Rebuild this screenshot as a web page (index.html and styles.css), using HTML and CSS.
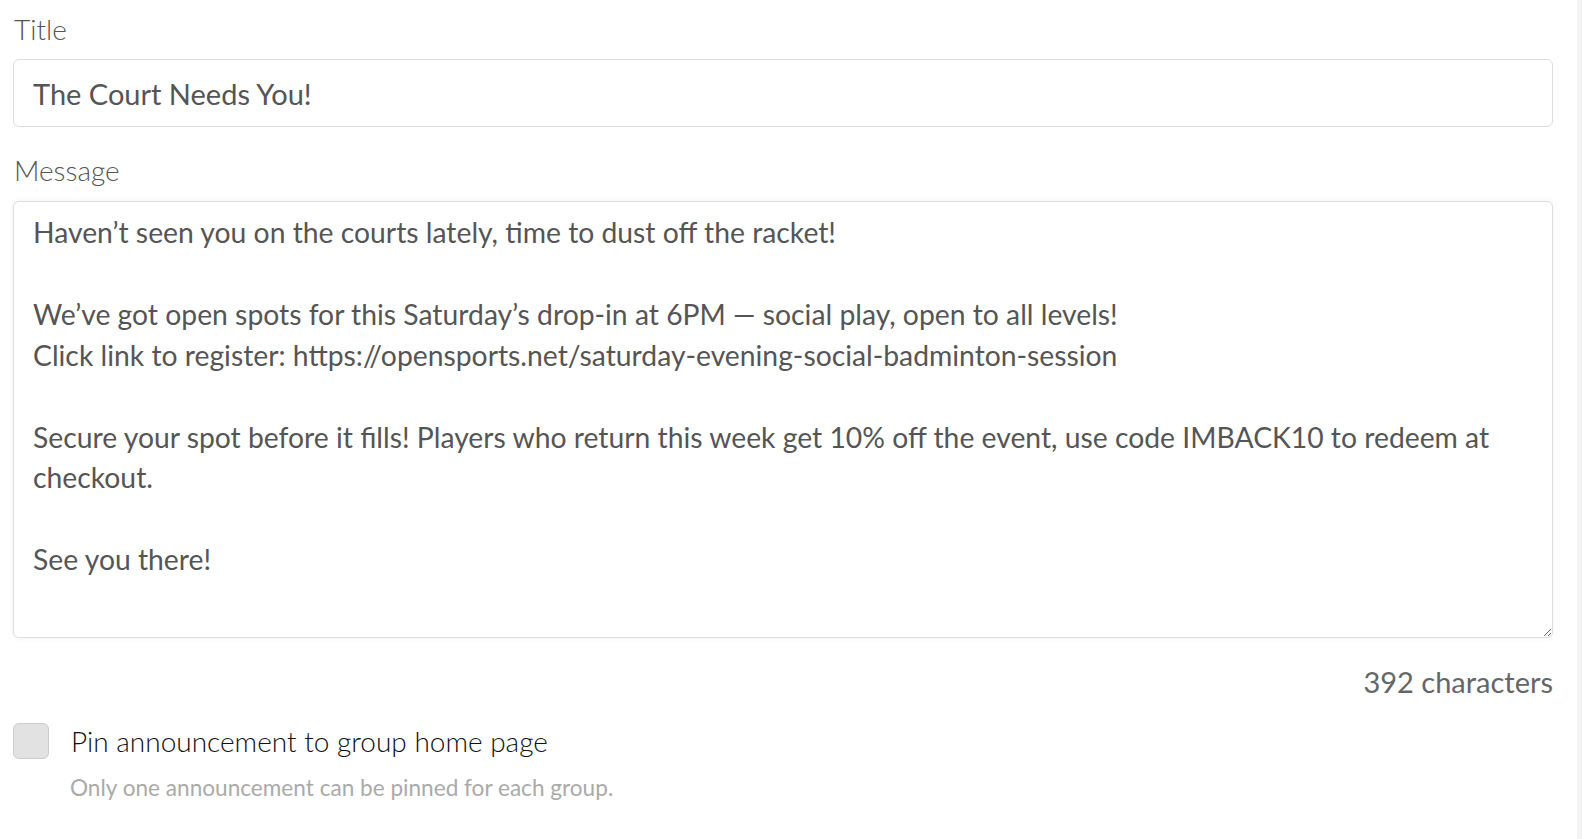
FILE: index.html
```html
<!DOCTYPE html>
<html lang="en">
<head>
    <meta charset="UTF-8" />
    <meta name="viewport" content="width=device-width, initial-scale=1.0" />
    <title>New Announcement</title>
    <link rel="stylesheet" href="styles.css">
</head>
<body>
    <div class="page">
        <form class="announcement-form">
            <label class="field-label" for="titleInput">Title</label>
            <input type="text" class="title-input" id="titleInput" value="The Court Needs You!" />

            <label class="field-label message-label" for="messageInput">Message</label>
            <textarea class="message-input" id="messageInput">Haven’t seen you on the courts lately, time to dust off the racket!

We’ve got open spots for this Saturday’s drop-in at 6PM — social play, open to all levels!
Click link to register: https://opensports.net/saturday-evening-social-badminton-session

Secure your spot before it fills! Players who return this week get 10% off the event, use code IMBACK10 to redeem at checkout.

See you there!</textarea>
            <div class="char-count">392 characters</div>

            <div class="pin-option">
                <input type="checkbox" class="pin-checkbox" id="pinCheckbox" />
                <label for="pinCheckbox" class="pin-label">Pin announcement to group home page</label>
            </div>
            <p class="pin-help">Only one announcement can be pinned for each group.</p>
        </form>
        <div class="side-strip"></div>
    </div>
</body>
</html>
```

FILE: styles.css
```css
body {
    font-family: 'Lato', 'Open Sans', Arial, sans-serif;
    background-color: #fff;
    margin: 0;
    padding: 0;
}
.page {
    display: flex;
    min-height: 839px;
}
.announcement-form {
    flex: 1;
    padding: 9px 24px 0 13px;
    display: flex;
    flex-direction: column;
}
.side-strip {
    width: 5px;
    background-color: #f3f3f3;
}
.field-label {
    display: block;
    font-size: 28px;
    font-weight: 300;
    color: #555;
    line-height: 40px;
    padding-left: 1px;
    margin-bottom: 10px;
}
.message-label {
    margin-top: 23px;
    margin-bottom: 11px;
}
.title-input {
    box-sizing: border-box;
    width: 100%;
    height: 68px;
    border: 1px solid #ddd;
    border-radius: 6px;
    padding: 0 19px;
    font-family: inherit;
    font-size: 29px;
    color: #555;
    outline: none;
}
.message-input {
    box-sizing: border-box;
    width: 100%;
    height: 437px;
    border: 1px solid #ddd;
    border-radius: 6px;
    padding: 10px 19px;
    font-family: inherit;
    font-size: 28.3px;
    line-height: 40.9px;
    color: #555;
    box-shadow: 0 0 6px rgba(0,0,0,0.06);
    outline: none;
    resize: vertical;
}
.char-count {
    text-align: right;
    font-size: 29px;
    color: #666;
    margin-top: 24px;
    line-height: 40px;
}
.pin-option {
    display: flex;
    align-items: center;
    gap: 22px;
    margin-top: 21px;
}
.pin-checkbox {
    appearance: none;
    -webkit-appearance: none;
    width: 36px;
    height: 36px;
    margin: 0;
    background-color: #e2e2e2;
    border: 1px solid #ccc;
    border-radius: 6px;
}
.pin-label {
    font-size: 28px;
    font-weight: 300;
    color: #111;
}
.pin-help {
    margin: 15px 0 0 57px;
    font-size: 22.6px;
    color: #aaa;
}
```
